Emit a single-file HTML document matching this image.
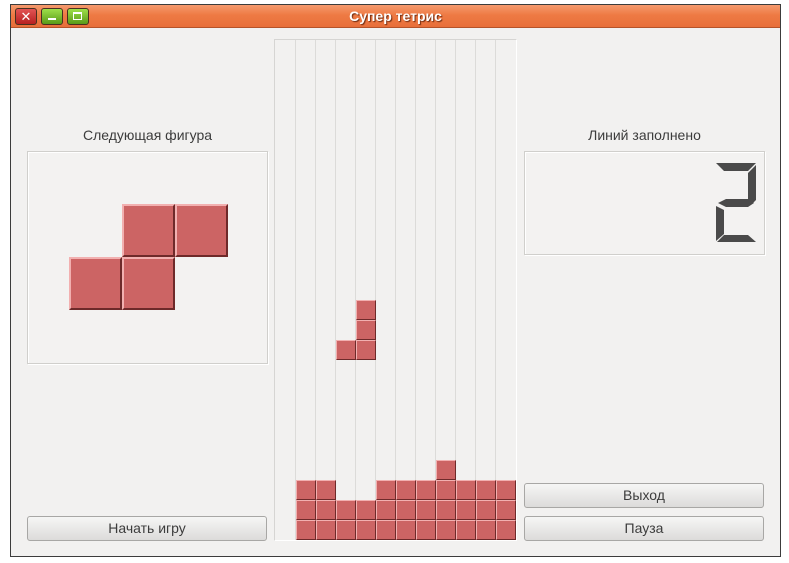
<!DOCTYPE html>
<html><head><meta charset="utf-8"><style>
*{margin:0;padding:0;box-sizing:border-box}
body{width:789px;height:563px;background:#fff;position:relative;overflow:hidden;font-family:"Liberation Sans","DejaVu Sans",sans-serif}
.a{position:absolute}
.win{left:10px;top:4px;width:771px;height:553px;border:1px solid #3c3c3c;background:#f2f1f0}
.title{left:11px;top:5px;width:769px;height:23px;background:linear-gradient(#f59a6e,#ee7a44 45%,#e86f3a);border-bottom:1px solid #b5532a;color:#fff;font-weight:bold;font-size:14px;text-align:center;line-height:23px;text-shadow:1px 1px 1px #6b2a10}
.wb{top:8px;width:22px;height:17px;border:1px solid #4a3020;border-radius:3px}
.c{position:absolute;width:20px;height:20px;background:#cc6464;border-top:1px solid #f2b0b0;border-left:1px solid #f2b0b0;border-bottom:1px solid #6e2a2a;border-right:1px solid #6e2a2a}
.b{position:absolute;width:53px;height:53px;background:#cc6464;border-top:2px solid #f2b0b0;border-left:2px solid #f2b0b0;border-bottom:2px solid #6e2a2a;border-right:2px solid #6e2a2a}
.frame{border:1px solid #d0cfcc;box-shadow:inset 1px 1px 0 #fff,1px 1px 0 #fff;background:#f3f2f1}
.btn{position:absolute;height:25px;border:1px solid #a8a7a5;border-radius:3px;background:linear-gradient(#f6f6f5,#dcdbda);font-size:14px;color:#3c3c3c;text-align:center;line-height:23px}
.lbl{position:absolute;font-size:14px;color:#3c3c3c;text-align:center}
.vl{position:absolute;top:40px;width:1px;height:500px;background:#dcdbd9}
</style></head><body>
<div class="a win"></div>
<div class="a title">Супер тетрис</div>
<div class="a wb" style="left:15px;background:linear-gradient(#e25454,#b72020);color:#fff;font-size:13px;font-weight:bold;text-align:center;line-height:15px">✕</div>
<div class="a wb" style="left:41px;background:linear-gradient(#9ee04a,#5a9a18)"><div class="a" style="left:6px;top:9px;width:8px;height:2px;background:#fff"></div></div>
<div class="a wb" style="left:67px;background:linear-gradient(#9ee04a,#5a9a18)"><div class="a" style="left:5px;top:3px;width:9px;height:8px;border:2px solid #fff;border-width:2px 1px 1px 1px"></div></div>

<div class="lbl" style="left:27px;top:127px;width:241px">Следующая фигура</div>
<div class="a frame" style="left:27px;top:151px;width:241px;height:213px"></div>
<div class="b" style="left:122px;top:204px"></div>
<div class="b" style="left:175px;top:204px"></div>
<div class="b" style="left:69px;top:257px"></div>
<div class="b" style="left:122px;top:257px"></div>

<div class="a" style="left:274px;top:39px;width:243px;height:502px;border:1px solid #d6d5d3;border-right-color:#fff;border-bottom-color:#fff;background:#f2f1f0"></div>
<div class="vl" style="left:295px"></div><div class="vl" style="left:315px"></div><div class="vl" style="left:335px"></div><div class="vl" style="left:355px"></div><div class="vl" style="left:375px"></div><div class="vl" style="left:395px"></div><div class="vl" style="left:415px"></div><div class="vl" style="left:435px"></div><div class="vl" style="left:455px"></div><div class="vl" style="left:475px"></div><div class="vl" style="left:495px"></div>

<div class="c" style="left:356px;top:300px"></div>
<div class="c" style="left:356px;top:320px"></div>
<div class="c" style="left:356px;top:340px"></div>
<div class="c" style="left:336px;top:340px"></div>
<div class="c" style="left:436px;top:460px"></div>
<div class="c" style="left:296px;top:480px"></div><div class="c" style="left:316px;top:480px"></div>
<div class="c" style="left:376px;top:480px"></div><div class="c" style="left:396px;top:480px"></div><div class="c" style="left:416px;top:480px"></div><div class="c" style="left:436px;top:480px"></div><div class="c" style="left:456px;top:480px"></div><div class="c" style="left:476px;top:480px"></div><div class="c" style="left:496px;top:480px"></div>
<div class="c" style="left:296px;top:500px"></div><div class="c" style="left:316px;top:500px"></div><div class="c" style="left:336px;top:500px"></div><div class="c" style="left:356px;top:500px"></div><div class="c" style="left:376px;top:500px"></div><div class="c" style="left:396px;top:500px"></div><div class="c" style="left:416px;top:500px"></div><div class="c" style="left:436px;top:500px"></div><div class="c" style="left:456px;top:500px"></div><div class="c" style="left:476px;top:500px"></div><div class="c" style="left:496px;top:500px"></div>
<div class="c" style="left:296px;top:520px"></div><div class="c" style="left:316px;top:520px"></div><div class="c" style="left:336px;top:520px"></div><div class="c" style="left:356px;top:520px"></div><div class="c" style="left:376px;top:520px"></div><div class="c" style="left:396px;top:520px"></div><div class="c" style="left:416px;top:520px"></div><div class="c" style="left:436px;top:520px"></div><div class="c" style="left:456px;top:520px"></div><div class="c" style="left:476px;top:520px"></div><div class="c" style="left:496px;top:520px"></div>

<div class="lbl" style="left:524px;top:127px;width:241px">Линий заполнено</div>
<div class="a frame" style="left:524px;top:151px;width:241px;height:104px"></div>
<svg class="a" style="left:714px;top:162px" width="44" height="82" viewBox="0 0 44 82">
<polygon points="2,1 42,1 34,9 10,9" fill="#4a4a4a"/>
<polygon points="42,3 42,38 38,42 34,38 34,11" fill="#4a4a4a"/>
<polygon points="4,41 12,37 34,37 40,41 34,45 12,45" fill="#4a4a4a"/>
<polygon points="2,44 10,48 10,72 2,79" fill="#4a4a4a"/>
<polygon points="3,80 10,73 34,73 42,80" fill="#4a4a4a"/>
</svg>

<div class="btn" style="left:27px;top:516px;width:240px">Начать игру</div>
<div class="btn" style="left:524px;top:483px;width:240px">Выход</div>
<div class="btn" style="left:524px;top:516px;width:240px">Пауза</div>
</body></html>
